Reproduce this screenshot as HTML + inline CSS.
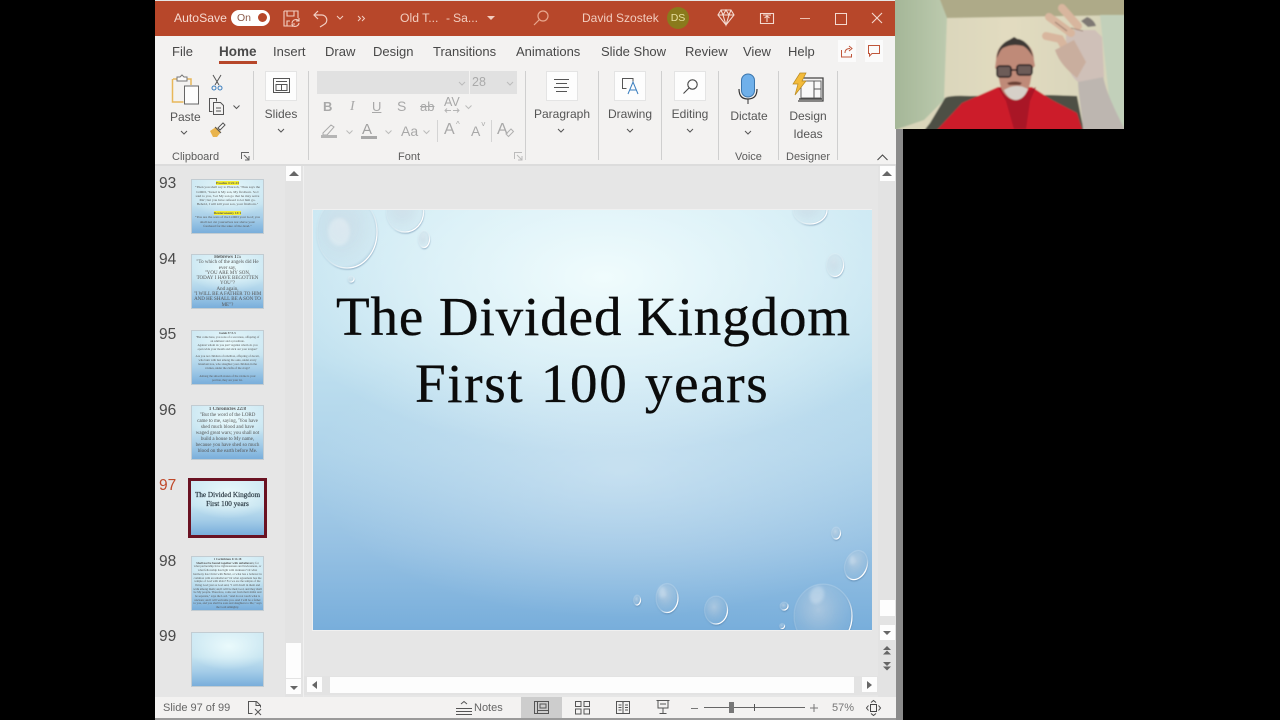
<!DOCTYPE html>
<html><head><meta charset="utf-8"><style>
html,body{margin:0;padding:0;width:1280px;height:720px;background:#000;overflow:hidden}
body{position:relative;font-family:"Liberation Sans",sans-serif;color:#444}
.a{position:absolute;white-space:nowrap}
.tab{position:absolute;top:43px;font-size:13px;color:#484848;line-height:17px}
.lbl{position:absolute;font-size:12px;color:#555;text-align:center;line-height:18px;white-space:nowrap}
.grp{position:absolute;top:157px;font-size:11px;color:#5c5c5c;line-height:0;white-space:nowrap}
.sep{position:absolute;top:71px;width:1px;height:89px;background:#cfcfcf}
.btn{position:absolute;top:71px;width:32px;height:30px;background:#fdfdfd;border:1px solid #e4e4e4;box-sizing:border-box}
.num{position:absolute;left:159px;font-size:15.5px;color:#4a4a4a;line-height:18px}
.th{position:absolute;left:191px;width:73px;height:55px;box-sizing:border-box;border:1px solid #c2ccd2;overflow:hidden;text-align:center;font-family:"Liberation Serif",serif;color:#555;background:radial-gradient(ellipse 60% 45% at 52% 25%,#eafafc 0%,rgba(234,250,252,0) 100%),linear-gradient(#cfe9f3 0%,#c4e3f0 45%,#a5cde8 72%,#79aedb 100%)}
.tx{display:block;filter:blur(.3px)}
.sb{position:absolute;background:#fdfdfd}
svg{position:absolute;overflow:visible}
</style></head><body>
<!-- window -->
<div class="a" style="left:155px;top:0;width:741px;height:720px;background:#e6e6e6"></div>
<div class="a" style="left:896px;top:129px;width:7px;height:591px;background:#8b8b8b"></div>
<!-- title bar -->
<div class="a" style="left:155px;top:1px;width:741px;height:35px;background:#b7472a"></div>
<div class="a" style="left:174px;top:11px;font-size:12.200px;color:#f6d9cf;line-height:15px">AutoSave</div>
<div class="a" style="left:231px;top:10px;width:39px;height:16px;border-radius:8px;background:#fff"></div>
<div class="a" style="left:237px;top:12px;font-size:10.500px;color:#8a5a4a;line-height:13px">On</div>
<div class="a" style="left:258px;top:13px;width:9px;height:9px;border-radius:5px;background:#b7472a"></div>
<svg style="left:282px;top:10px" width="20" height="18" fill="none" stroke="#f2cfc3" stroke-width="1.100"><path d="M2 1h14v7M2 1v15h7M5 1v5h7V1M5 16v-5h3"/><path d="M10 13a4 4 0 0 1 7-2M17 13a4 4 0 0 1-7 2M17 8v3h-3M10 17v-3h3"/></svg>
<svg style="left:312px;top:10px" width="18" height="18" fill="none" stroke="#f2cfc3" stroke-width="1.200"><path d="M6 1L2 5l4 4M2 5h8a5 5 0 0 1 2 9.500L8 17"/></svg>
<svg style="left:336px;top:15px" width="8" height="6" fill="none" stroke="#f2cfc3"><path d="M1 1l3 3 3-3"/></svg>
<svg style="left:357px;top:15px" width="9" height="7" fill="none" stroke="#f2cfc3"><path d="M1 1l2.500 2.500L1 6M5 1l2.500 2.500L5 6"/></svg>
<div class="a" style="left:400px;top:11px;font-size:12.200px;color:#f2cdbf;line-height:15px">Old T...</div>
<div class="a" style="left:446px;top:11px;font-size:12.200px;color:#f2cdbf;line-height:15px">-</div>
<div class="a" style="left:453px;top:11px;font-size:12.200px;color:#f2cdbf;line-height:15px">Sa...</div>
<div class="a" style="left:487px;top:16px;width:0;height:0;border:4px solid transparent;border-top:4px solid #f2cdbf"></div>
<svg style="left:533px;top:10px" width="16" height="17" fill="none" stroke="#e8a78e" stroke-width="1.200"><circle cx="10" cy="6" r="5"/><path d="M6.500 9.500L1 15"/></svg>
<div class="a" style="left:582px;top:11px;font-size:12px;color:#f2cdbf;line-height:15px">David Szostek</div>
<div class="a" style="left:667px;top:7px;width:22px;height:22px;border-radius:11px;background:#8a7a1c;color:#e8e0a0;font-size:10.500px;line-height:22px;text-align:center">DS</div>
<svg style="left:717px;top:9px" width="18" height="17" fill="none" stroke="#f4dad0" stroke-width="1.100"><path d="M4 1h10l3 5-8 10L1 6zM1 6h16M6 6l3 10 3-10M4 1l2 5 3-5 3 5 2-5"/></svg>
<svg style="left:760px;top:13px" width="15" height="11" fill="none" stroke="#f4dad0" stroke-width="1.100"><path d="M.5.500h13v10H.5zM7 9V3M4.500 5L7 3l2.500 2M3 2h8"/></svg>
<div class="a" style="left:800px;top:18px;width:10px;height:1px;background:#eec0b0"></div>
<div class="a" style="left:835px;top:13px;width:10px;height:10px;border:1px solid #f4dad0"></div>
<svg style="left:871px;top:12px" width="12" height="12" stroke="#f4dad0" stroke-width="1.100"><path d="M1 1l10 10M11 1L1 11"/></svg>
<!-- ribbon -->
<div class="a" style="left:155px;top:36px;width:741px;height:128px;background:#f3f2f1"></div>
<div class="a" style="left:155px;top:164px;width:741px;height:2px;background:#dcdcdc"></div>
<div class="tab" style="left:172px">File</div>
<div class="tab" style="left:219px;font-weight:bold;color:#4a4a4a;font-size:13.500px">Home</div>
<div class="a" style="left:219px;top:61px;width:38px;height:3px;background:#b7472a"></div>
<div class="tab" style="left:273px">Insert</div>
<div class="tab" style="left:325px">Draw</div>
<div class="tab" style="left:373px">Design</div>
<div class="tab" style="left:433px">Transitions</div>
<div class="tab" style="left:516px">Animations</div>
<div class="tab" style="left:601px">Slide Show</div>
<div class="tab" style="left:685px">Review</div>
<div class="tab" style="left:743px">View</div>
<div class="tab" style="left:788px">Help</div>
<div class="a" style="left:838px;top:40px;width:18px;height:22px;background:#fbfbfb"></div>
<svg style="left:841px;top:45px" width="13" height="13" fill="none" stroke="#c0563a" stroke-width="1"><path d="M.5 5v7h10V9M4 8c0-3 2-4.500 5-4.500M8 1l3 2.500L8 6"/></svg>
<div class="a" style="left:865px;top:40px;width:18px;height:22px;background:#fbfbfb"></div>
<svg style="left:868px;top:45px" width="13" height="12" fill="none" stroke="#c0563a" stroke-width="1"><path d="M.5.500h11v8H4L1.500 11V8.500h-1z"/></svg>
<!-- Clipboard -->
<svg style="left:171px;top:74px" width="32" height="32" fill="none"><path d="M2 5h5M16 5h4v6" stroke="#e8b75a" stroke-width="1.500"/><path d="M1.500 5v23h11" stroke="#e8b75a" stroke-width="1.500"/><path d="M6 7V3h3l2-2 2 2h3v4z" fill="#fafafa" stroke="#777"/><rect x="13.500" y="12" width="14" height="18" fill="#fdfdfd" stroke="#666"/></svg>
<div class="lbl" style="left:170px;top:108px;width:30px">Paste</div>
<svg style="left:180px;top:130px" width="8" height="5" fill="none" stroke="#555"><path d="M1 1l3 3 3-3"/></svg>
<svg style="left:211px;top:75px" width="12" height="16" fill="none" stroke="#555"><path d="M2 0l6 10M10 0L4 10"/><circle cx="3" cy="13" r="2" stroke="#3a7ebf"/><circle cx="9" cy="13" r="2" stroke="#3a7ebf"/></svg>
<svg style="left:209px;top:98px" width="17" height="17" fill="none" stroke="#555"><path d="M3.500 13.500H.5V.5h7v3"/><path d="M4.500 4.500h7l3 3v9h-10zM7 10h5M7 13h5"/></svg>
<svg style="left:233px;top:105px" width="7" height="5" fill="none" stroke="#555"><path d="M.5.500l3 3 3-3"/></svg>
<svg style="left:209px;top:122px" width="17" height="16"><path d="M1 9l6-4 5 5-4 5H4z" fill="#e9b44c"/><path d="M9 6l5-5 2 2-5 5z" fill="#fff" stroke="#555"/><path d="M6 5l6 6" stroke="#555"/></svg>
<div class="grp" style="left:172px">Clipboard</div>
<svg style="left:241px;top:152px" width="9" height="9" fill="none" stroke="#666"><path d="M.5 7V.5H8M3 3l5 5M8 4v4H4"/></svg>
<div class="sep" style="left:253px"></div>
<!-- Slides -->
<div class="btn" style="left:265px"></div>
<svg style="left:273px;top:78px" width="17" height="15" fill="none" stroke="#555"><path d="M.5.500h16v14H.5z"/><path d="M3 3.500h11M3 6.500h11v6H3zM8.500 6.500v6"/></svg>
<div class="lbl" style="left:264px;top:105px;width:34px">Slides</div>
<svg style="left:277px;top:128px" width="8" height="5" fill="none" stroke="#555"><path d="M1 1l3 3 3-3"/></svg>
<div class="sep" style="left:308px"></div>
<!-- Font -->
<div class="a" style="left:317px;top:71px;width:152px;height:23px;background:#e1e1e1"></div>
<div class="a" style="left:470px;top:71px;width:47px;height:23px;background:#e1e1e1;color:#aaa;font-size:12.500px;line-height:23px;text-indent:2px">28</div>
<svg style="left:458px;top:81px" width="8" height="5" fill="none" stroke="#bbb"><path d="M1 1l3 3 3-3"/></svg>
<svg style="left:506px;top:81px" width="8" height="5" fill="none" stroke="#bbb"><path d="M1 1l3 3 3-3"/></svg>
<div class="a" style="left:323px;top:98px;font-size:13px;font-weight:bold;color:#a8a8a8;line-height:17px">B</div>
<div class="a" style="left:350px;top:98px;font-size:14px;font-style:italic;font-family:'Liberation Serif',serif;color:#a8a8a8;line-height:17px">I</div>
<div class="a" style="left:372px;top:98px;font-size:13px;text-decoration:underline;color:#a8a8a8;line-height:17px">U</div>
<div class="a" style="left:397px;top:98px;font-size:14px;color:#a8a8a8;line-height:17px">S</div>
<div class="a" style="left:420px;top:99px;font-size:13px;text-decoration:line-through;color:#a8a8a8;line-height:16px">ab</div>
<div class="a" style="left:444px;top:95px;font-size:12.500px;color:#a8a8a8;line-height:15px">AV</div>
<svg style="left:444px;top:108px" width="16" height="5" fill="none" stroke="#b5b5b5"><path d="M7 2.500H1M3 .5L1 2.500l2 2M9 2.500h6M13 .5l2 2-2 2"/></svg>
<svg style="left:465px;top:105px" width="7" height="5" fill="none" stroke="#bbb"><path d="M.5.500l3 3 3-3"/></svg>
<svg style="left:321px;top:123px" width="17" height="16" fill="none" stroke="#aaa"><path d="M2 10l8-8 3 2-7 8H2z"/></svg>
<div class="a" style="left:321px;top:135px;width:16px;height:3px;background:#b5b5b5"></div>
<svg style="left:346px;top:130px" width="7" height="5" fill="none" stroke="#bbb"><path d="M.5.500l3 3 3-3"/></svg>
<div class="a" style="left:362px;top:121px;font-size:15px;color:#a0a0a0;line-height:17px">A</div>
<div class="a" style="left:361px;top:136px;width:16px;height:3px;background:#a8a8a8"></div>
<svg style="left:385px;top:130px" width="7" height="5" fill="none" stroke="#bbb"><path d="M.5.500l3 3 3-3"/></svg>
<div class="a" style="left:401px;top:123px;font-size:14px;color:#a8a8a8;line-height:17px">Aa</div>
<svg style="left:423px;top:130px" width="7" height="5" fill="none" stroke="#bbb"><path d="M.5.500l3 3 3-3"/></svg>
<div class="a" style="left:437px;top:120px;width:1px;height:22px;background:#d4d4d4"></div>
<div class="a" style="left:444px;top:121px;font-size:16px;color:#a8a8a8;line-height:18px">A</div>
<div class="a" style="left:456px;top:120px;font-size:8px;color:#a8a8a8;line-height:10px">^</div>
<div class="a" style="left:471px;top:123px;font-size:14px;color:#a8a8a8;line-height:17px">A</div>
<div class="a" style="left:481px;top:120px;font-size:8px;color:#a8a8a8;line-height:10px">˅</div>
<div class="a" style="left:491px;top:120px;width:1px;height:22px;background:#d4d4d4"></div>
<div class="a" style="left:497px;top:121px;font-size:16px;color:#a8a8a8;line-height:18px">A</div>
<svg style="left:505px;top:128px" width="9" height="10" fill="none" stroke="#b0b0b0"><path d="M1 6l5-5 2.500 2.500-5 5z"/></svg>
<div class="grp" style="left:398px">Font</div>
<svg style="left:514px;top:152px" width="9" height="9" fill="none" stroke="#bbb"><path d="M.5 7V.5H8M3 3l5 5M8 4v4H4"/></svg>
<div class="sep" style="left:525px"></div>
<!-- Paragraph -->
<div class="btn" style="left:546px"></div>
<svg style="left:554px;top:79px" width="16" height="13" stroke="#555"><path d="M0 .5h15M2 4.500h11M0 8.500h15M2 12.500h11"/></svg>
<div class="lbl" style="left:532px;top:105px;width:60px">Paragraph</div>
<svg style="left:557px;top:128px" width="8" height="5" fill="none" stroke="#555"><path d="M1 1l3 3 3-3"/></svg>
<div class="sep" style="left:598px"></div>
<!-- Drawing -->
<div class="btn" style="left:614px"></div>
<svg style="left:622px;top:78px" width="18" height="17" fill="none" stroke="#555"><path d="M8 .5H.5v10h4"/><path d="M8 .5h3v3"/><path d="M6 16l5-12 5 12M8 12h6" stroke="#3a7ebf"/></svg>
<div class="lbl" style="left:605px;top:105px;width:50px">Drawing</div>
<svg style="left:626px;top:128px" width="8" height="5" fill="none" stroke="#555"><path d="M1 1l3 3 3-3"/></svg>
<div class="sep" style="left:661px"></div>
<!-- Editing -->
<div class="btn" style="left:674px"></div>
<svg style="left:683px;top:79px" width="15" height="15" fill="none" stroke="#444" stroke-width="1.100"><circle cx="9.500" cy="5.500" r="4.700"/><path d="M6 9l-5.500 5.500"/></svg>
<div class="lbl" style="left:665px;top:105px;width:50px">Editing</div>
<svg style="left:686px;top:128px" width="8" height="5" fill="none" stroke="#555"><path d="M1 1l3 3 3-3"/></svg>
<div class="sep" style="left:718px"></div>
<!-- Dictate -->
<svg style="left:738px;top:73px" width="20" height="32"><rect x="3.500" y="1" width="13" height="23" rx="6.500" fill="#6fb0ea" stroke="#3b76ad"/><path d="M1 16c0 8 4 10 9 10s9-2 9-10" fill="none" stroke="#333" stroke-width="1.200"/><path d="M10 26v5" stroke="#333"/></svg>
<div class="lbl" style="left:725px;top:107px;width:48px">Dictate</div>
<svg style="left:744px;top:130px" width="8" height="5" fill="none" stroke="#555"><path d="M1 1l3 3 3-3"/></svg>
<div class="grp" style="left:735px">Voice</div>
<div class="sep" style="left:778px"></div>
<!-- Design Ideas -->
<svg style="left:792px;top:72px" width="32" height="30" fill="none"><path d="M6 6h25v23H6" stroke="#444" stroke-width="1.300"/><path d="M9 9h20v17H9z" fill="#f8f8f8" stroke="#666"/><path d="M22 9v17M22 17h7" stroke="#555"/><path d="M7 27h23" stroke="#444" stroke-width="1.500"/><path d="M8 1h6l-4 8h4L3 23l3-11H1z" fill="#f3bb3a" stroke="#b98a1f" stroke-width=".7"/></svg>
<div class="lbl" style="left:785px;top:107px;width:46px">Design<br>Ideas</div>
<div class="grp" style="left:786px">Designer</div>
<div class="sep" style="left:837px"></div>
<svg style="left:877px;top:154px" width="11" height="7" fill="none" stroke="#444"><path d="M.5 6L5.500 1l5 5"/></svg>
<!-- thumbs pane -->
<div class="num" style="top:175px">93</div>
<div class="num" style="top:251px">94</div>
<div class="num" style="top:326px">95</div>
<div class="num" style="top:402px">96</div>
<div class="num" style="top:477px;color:#c0492a">97</div>
<div class="num" style="top:553px">98</div>
<div class="num" style="top:628px">99</div>
<div class="th" style="top:179px;font-size:3.500px;line-height:4.300px;padding:1px 2px"><span class="tx"><span style="background:#f5ee2e;font-weight:bold">Exodus 4:22-23</span><br>"Then you shall say to Pharaoh, 'Thus says the LORD, "Israel is My son, My firstborn. So I said to you, 'Let My son go that he may serve Me'; but you have refused to let him go. Behold, I will kill your son, your firstborn."<br><br><span style="background:#f5ee2e;font-weight:bold">Deuteronomy 14:1</span><br>"You are the sons of the LORD your God; you shall not cut yourselves nor shave your forehead for the sake of the dead."</span></div>
<div class="th" style="top:254px;font-size:5px;line-height:5.300px;padding:0 1px"><span class="tx"><b>Hebrews 1:5</b><br>"To which of the angels did He ever say,<br>"YOU ARE MY SON,<br>TODAY I HAVE BEGOTTEN YOU"?<br>And again,<br>"I WILL BE A FATHER TO HIM<br>AND HE SHALL BE A SON TO ME"?</span></div>
<div class="th" style="top:330px;font-size:3px;line-height:3.900px;padding:1px 3px"><span class="tx"><b>Isaiah 57:3-5</b><br>"But come here, you sons of a sorceress, offspring of an adulterer and a prostitute.<br>Against whom do you jest? Against whom do you open wide your mouth and stick out your tongue?<br><br>Are you not children of rebellion, offspring of deceit, who burn with lust among the oaks, under every luxuriant tree, who slaughter your children in the ravines, under the clefts of the crags?<br><br>Among the smooth stones of the ravine is your portion, they are your lot.</span></div>
<div class="th" style="top:405px;font-size:5px;line-height:6px;padding:1px 2px"><span class="tx"><b>1 Chronicles 22:8</b><br>"But the word of the LORD came to me, saying, 'You have shed much blood and have waged great wars; you shall not build a house to My name, because you have shed so much blood on the earth before Me.</span></div>
<div class="a" style="left:188px;top:478px;width:79px;height:60px;box-sizing:border-box;border:3px solid #6a1222"></div>
<div class="th" style="left:191px;top:481px;width:73px;height:54px;border:0;font-size:7.200px;line-height:8.500px;padding-top:10px;color:#2b3a44;-webkit-text-stroke:.2px #2b3a44"><span class="tx">The Divided Kingdom<br>First 100 years</span></div>
<div class="th" style="top:556px;font-size:3px;line-height:3.700px;padding:1px 1px"><span class="tx"><b>1 Corinthians 6:14-18</b><br><b>Shall not be bound together with unbelievers;</b> for what partnership have righteousness and lawlessness, or what fellowship has light with darkness? Or what harmony has Christ with Belial, or what has a believer in common with an unbeliever? Or what agreement has the temple of God with idols? For we are the temple of the living God; just as God said, "I will dwell in them and walk among them; and I will be their God, and they shall be My people. Therefore, come out from their midst and be separate," says the Lord. "And do not touch what is unclean; and I will welcome you. And I will be a father to you, and you shall be sons and daughters to Me," says the Lord Almighty.</span></div>
<div class="th" style="top:632px"></div>
<!-- thumb scrollbar -->
<div class="a" style="left:285px;top:166px;width:18px;height:531px;background:#e3e3e3"></div>
<div class="sb" style="left:286px;top:166px;width:15px;height:15px"></div>
<div class="a" style="left:289px;top:171px;width:0;height:0;border:5px solid transparent;border-top:0;border-bottom:5px solid #666"></div>
<div class="sb" style="left:286px;top:643px;width:15px;height:35px"></div>
<div class="sb" style="left:286px;top:679px;width:15px;height:15px"></div>
<div class="a" style="left:290px;top:686px;width:0;height:0;border:4px solid transparent;border-bottom:0;border-top:4px solid #666"></div>
<div class="a" style="left:303px;top:166px;width:1px;height:531px;background:#f0f0f0"></div>
<!-- slide -->
<div class="a" style="left:312px;top:209px;width:560px;height:422px;background:#f0f0f0"></div>
<div class="a" style="left:313px;top:210px;width:559px;height:420px;background:radial-gradient(ellipse 60% 42% at 52% 16%,rgba(240,252,253,1) 0%,rgba(236,250,252,.55) 55%,rgba(230,246,250,0) 100%),radial-gradient(ellipse 55% 35% at 55% 62%,rgba(222,238,247,.55) 0%,rgba(222,238,247,0) 100%),linear-gradient(#cae7f2 0%,#bfe0ef 35%,#aed3ea 58%,#96c1e3 80%,#78aedb 100%);overflow:hidden">
<svg width="559" height="420" style="left:0;top:0">
<defs>
<radialGradient id="d" cx=".42" cy=".4" r=".62"><stop offset="0" stop-color="#fff" stop-opacity=".4"/><stop offset=".6" stop-color="#fff" stop-opacity=".14"/><stop offset=".9" stop-color="#fff" stop-opacity=".05"/><stop offset="1" stop-color="#5d8fb5" stop-opacity=".18"/></radialGradient>
<linearGradient id="rim" x1="0" y1="0" x2="1" y2="1"><stop offset="0" stop-color="#fff" stop-opacity=".1"/><stop offset=".55" stop-color="#fff" stop-opacity=".2"/><stop offset=".8" stop-color="#fff"/><stop offset="1" stop-color="#fff"/></linearGradient>
</defs>
<g fill="url(#d)" stroke="url(#rim)" stroke-width="1.300" style="filter:drop-shadow(0 1.200px .8px rgba(60,100,140,.55))">
<ellipse cx="34" cy="22" rx="30" ry="36"/>
<ellipse cx="92" cy="2" rx="18.500" ry="20"/>
<ellipse cx="111" cy="29" rx="5.500" ry="8.500"/>
<circle cx="38" cy="69" r="3"/>
<ellipse cx="497" cy="0" rx="17" ry="14"/>
<ellipse cx="522" cy="55" rx="8.500" ry="11.500"/>
<ellipse cx="523" cy="323" rx="4.500" ry="6"/>
<ellipse cx="543" cy="355" rx="11" ry="15" transform="rotate(20 543 355)"/>
<ellipse cx="510" cy="406" rx="29" ry="32"/>
<circle cx="471" cy="396" r="4"/>
<circle cx="469" cy="416" r="2.500"/>
<ellipse cx="403" cy="400" rx="11.500" ry="14"/>
<ellipse cx="354" cy="388" rx="11" ry="14.500"/>
<ellipse cx="324" cy="390" rx="3.500" ry="5"/>
</g>
<g fill="#fff" fill-opacity=".28" style="filter:blur(1.500px)">
<ellipse cx="26" cy="22" rx="11" ry="14"/>
<ellipse cx="504" cy="385" rx="7" ry="9" transform="rotate(20 504 385)"/>
<ellipse cx="349" cy="382" rx="3.500" ry="6"/>
<ellipse cx="539" cy="350" rx="2.500" ry="5"/>
</g>
</svg>
</div>
<div class="a" style="left:336px;top:283px;font-family:'Liberation Serif',serif;font-size:55px;line-height:67px;color:#0b0b0b;letter-spacing:.9px;-webkit-text-stroke:.35px #0b0b0b">The Divided Kingdom</div>
<div class="a" style="left:415px;top:350px;font-family:'Liberation Serif',serif;font-size:55px;line-height:67px;color:#0b0b0b;letter-spacing:1.700px;word-spacing:1px;-webkit-text-stroke:.35px #0b0b0b">First 100 years</div>
<!-- main v scrollbar -->
<div class="a" style="left:878px;top:166px;width:18px;height:531px;background:#e3e3e3"></div>
<div class="sb" style="left:880px;top:166px;width:15px;height:15px"></div>
<div class="a" style="left:882px;top:171px;width:0;height:0;border:5px solid transparent;border-top:0;border-bottom:5px solid #666"></div>
<div class="sb" style="left:880px;top:600px;width:15px;height:16px"></div>
<div class="sb" style="left:880px;top:625px;width:15px;height:15px"></div>
<div class="a" style="left:883px;top:631px;width:0;height:0;border:4px solid transparent;border-bottom:0;border-top:4px solid #666"></div>
<svg style="left:882px;top:646px" width="10" height="9" fill="#666"><path d="M5 0l4 4H1zM5 4.500l4 4H1z"/></svg>
<svg style="left:882px;top:662px" width="10" height="9" fill="#666"><path d="M1 0h8L5 4zM1 4.500h8l-4 4z"/></svg>
<!-- h scrollbar -->
<div class="a" style="left:304px;top:676px;width:574px;height:19px;background:#e3e3e3"></div>
<div class="sb" style="left:307px;top:677px;width:15px;height:15px"></div>
<div class="a" style="left:312px;top:681px;width:0;height:0;border:4px solid transparent;border-left:0;border-right:5px solid #666"></div>
<div class="sb" style="left:330px;top:677px;width:524px;height:16px"></div>
<div class="sb" style="left:862px;top:677px;width:15px;height:15px"></div>
<div class="a" style="left:867px;top:681px;width:0;height:0;border:4px solid transparent;border-right:0;border-left:5px solid #666"></div>
<!-- status bar -->
<div class="a" style="left:155px;top:697px;width:741px;height:21px;background:#f3f2f1"></div>
<div class="a" style="left:155px;top:718px;width:741px;height:2px;background:#9a9a9a"></div>
<div class="a" style="left:163px;top:701px;font-size:11px;color:#666;line-height:14px">Slide 97 of 99</div>
<svg style="left:248px;top:701px" width="15" height="15" fill="none" stroke="#555"><path d="M4.500 12.500h-4V.5h8l4 4v2"/><path d="M8 .5v4h4M7 8l6 6M13 8l-6 6"/></svg>
<svg style="left:456px;top:701px" width="17" height="15" fill="none" stroke="#555"><path d="M5 3l3-2.500L11 3M0 7.500h16M0 10.500h16M0 13.500h16"/></svg>
<div class="a" style="left:474px;top:701px;font-size:11px;color:#666;line-height:14px">Notes</div>
<div class="a" style="left:521px;top:697px;width:41px;height:21px;background:#cdcdcd"></div>
<svg style="left:534px;top:701px" width="15" height="13" fill="none" stroke="#555"><path d="M.5.500h14v12H.5zM3.500.5v12M3.500 9.500h11M6 3h6v4H6z"/></svg>
<svg style="left:575px;top:701px" width="15" height="13" fill="none" stroke="#555"><path d="M.5.500h5.500v5H.5zM9 .5h5.500v5H9zM.5 8h5.500v5H.5zM9 8h5.500v5H9z"/></svg>
<svg style="left:616px;top:701px" width="14" height="13" fill="none" stroke="#555"><path d="M.5.500h6l.5 1 .5-1h6v12h-6l-.5-.5-.5.5h-6zM7 1.500v11M2.500 4h3M2.500 6.500h3M2.500 9h3M9 4h3M9 6.500h3M9 9h3"/></svg>
<svg style="left:656px;top:700px" width="14" height="15" fill="none" stroke="#555"><path d="M.5.500h13M2 .5v7.500h10V.5M7 8v5M3.500 13.500h7M4 4h6"/></svg>
<div class="a" style="left:691px;top:708px;width:7px;height:1px;background:#777"></div>
<div class="a" style="left:704px;top:707px;width:101px;height:1px;background:#666"></div>
<div class="a" style="left:754px;top:704px;width:1px;height:7px;background:#555"></div>
<div class="a" style="left:729px;top:702px;width:5px;height:11px;background:#777"></div>
<svg style="left:810px;top:704px" width="8" height="8" stroke="#777"><path d="M0 4h8M4 0v8"/></svg>
<div class="a" style="left:832px;top:701px;font-size:11px;color:#777;line-height:14px">57%</div>
<svg style="left:866px;top:700px" width="15" height="16" fill="none" stroke="#444"><path d="M4.500 4.500h6v7h-6zM5 2.500L7.500.5l2.500 2M5 13.500l2.500 2 2.500-2M2.500 5.500L.5 8l2 2.500M12.500 5.500l2 2.500-2 2.500"/></svg>
<!-- webcam -->
<svg style="left:895px;top:0" width="229" height="129" viewBox="0 0 229 129">
<defs>
<clipPath id="cam"><rect width="229" height="129"/></clipPath>
<filter id="bl" x="-5%" y="-5%" width="110%" height="110%"><feGaussianBlur stdDeviation=".9"/></filter>
<linearGradient id="wl" x1="0" y1="0" x2="1" y2="0"><stop offset="0" stop-color="#a2b495"/><stop offset="1" stop-color="#bccaae"/></linearGradient>
<linearGradient id="wc" x1="0" y1="0" x2="1" y2="0"><stop offset="0" stop-color="#d6d3b8"/><stop offset=".5" stop-color="#e2dbc0"/><stop offset="1" stop-color="#d4d2b8"/></linearGradient>
</defs>
<g clip-path="url(#cam)"><g filter="url(#bl)">
<rect x="-3" y="-3" width="236" height="136" fill="url(#wc)"/>
<path d="M-3-3h47l8 20-3 83-20 20-35 12z" fill="url(#wl)"/>
<path d="M44-3h190v18l-182 3z" fill="#aeaa88"/>
<path d="M205 15h28v118h-15z" fill="#c2d0ba"/>
<path d="M28 132l7-9 15-25q4-3 25-2l80-1 27 1 7 36z" fill="#4d5045"/>
<path d="M40 132l27-29 36-16 34 0 20 13 25 13 6 19z" fill="#cc1a2c"/>
<path d="M103 87l8 14 8 28h12l4-28 6-14-18 9z" fill="#a91626"/>
<path d="M101 60c0-12 8-20 19-20s19 8 19 20l1 6-2 2-3 16c-3 9-9 16-15 16s-13-7-15-16l-3-14-2-2z" fill="#bf8a78"/>
<path d="M109 90c3 7 8 10 12 10s9-3 12-11c-3-1-5-3-11-3-6 0-9 2-13 4z" fill="#d6d0c8"/>
<path d="M112 83c5-2 11-2 15 0l-2 2h-11z" fill="#6a3f34"/>
<path d="M102 58c0-10 7-16 12-18l5-3c3 1 2 2 5 2 7 2 12 8 14 18-3-5-6-9-10-11-8-2-14-1-20 2-3 2-4 6-6 10z" fill="#3e3934"/>
<rect x="102" y="66" width="14" height="11" rx="2.500" fill="#6d5c58" stroke="#1c181a" stroke-width="1.500"/>
<rect x="122" y="65" width="15" height="10" rx="2.500" fill="#6d5c58" stroke="#1c181a" stroke-width="1.500"/>
<path d="M116 70h6" stroke="#1c181a" stroke-width="1.500"/>
<path d="M183 79l25-4c2 15 12 35 22 55h-42c-1-20-5-35-5-51z" fill="#bdb6b0"/>
<path d="M171 30l29 0 7 7 2 40-26 5c-10-8-12-18-12-52z" fill="#cfc0b8"/>
<g fill="none" stroke="#d8b69e" stroke-width="8" stroke-linecap="round"><path d="M167 8l16 18"/><path d="M154 17l22 16"/><path d="M151 36l14 3 8 14"/></g>
<path d="M160 50c4 12 12 20 22 28l9-16-12-22z" fill="#c9ae9e"/>
<path d="M192 17c4 1 8 5 9 9l-8 1-7-6z" fill="#7e7873"/>
<path d="M160 22l12 9M176 28l12 3" stroke="#8f6e62" stroke-width=".8" fill="none"/>
</g></g>
</svg>
</body></html>
